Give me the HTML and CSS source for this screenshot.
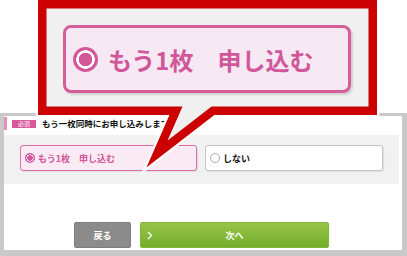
FILE: index.html
```html
<!DOCTYPE html>
<html>
<head>
    <meta charset="UTF-8">
    <title>もう一枚同時にお申し込み</title>
    <link rel="stylesheet" href="styles.css">
</head>
<body>
<div class="page">

    <div class="shot">
        <div class="q_head">
            <span class="badge">必須</span>
            <span class="q_title">もう一枚同時にお申し込みします</span>
        </div>
        <div class="panel">
            <label class="opt opt_on"><span class="radio"></span>もう1枚　申し込む</label>
            <label class="opt"><span class="radio"></span>しない</label>
        </div>
        <div class="actions">
            <button class="btn btn_back" type="button">戻る</button>
            <button class="btn btn_next" type="button">
                <svg class="chev" width="6" height="9" viewBox="0 0 6 9"><polyline points="1,1 4.5,4.5 1,8" fill="none" stroke="#fff" stroke-width="1.3"/></svg>
                次へ
            </button>
        </div>
    </div>

    <!-- zoomed callout -->
    <div class="callout">
        <svg class="callout_shape" width="407" height="180" viewBox="0 0 407 180">
            <path d="M42.25,4.25 H372.75 V110.75 H213 L157,154 L176,110.75 H42.25 Z"
                  fill="#f0f0f0" stroke="#fff" stroke-width="13" stroke-linejoin="miter" stroke-miterlimit="8"/>
            <path d="M42.25,4.25 H372.75 V110.75 H213 L157,154 L176,110.75 H42.25 Z"
                  fill="#f0f0f0" stroke="#cc0000" stroke-width="8.5" stroke-linejoin="miter" stroke-miterlimit="8"/>
        </svg>
        <div class="big_opt"><span class="big_radio"></span>もう1枚　申し込む</div>
    </div>

</div>
</body>
</html>
```

FILE: styles.css
```css
body {
    margin: 0;
    background: #fff;
    font-family: "Noto Sans CJK JP", sans-serif;
    color: #222;
}

.page {
    position: relative;
    width: 407px;
    height: 256px;
    overflow: hidden;
}

.shot {
    margin-top: 113px;
    height: 134px;
    border: solid #c9c9c9;
    border-width: 3px 5px 6px 4px;
    background: #fff;
}

.q_head {
    display: flex;
    align-items: center;
    height: 13px;
    margin-top: 1px;
    border-left: 3px solid #e58fbd;
}

.badge {
    width: 24px;
    height: 8px;
    margin-left: 5px;
    background: #d75a9b;
    color: #fff;
    font-size: 6px;
    line-height: 8px;
    text-align: center;
}

.q_title {
    margin-left: 6px;
    font-size: 8.5px;
    font-weight: bold;
    line-height: 13px;
    color: #111;
}

.panel {
    display: flex;
    gap: 8px;
    height: 49px;
    box-sizing: border-box;
    margin: 5px 3px 0 0;
    padding: 10px 0 0 16px;
    background: #f1f1f1;
}

.opt {
    display: flex;
    align-items: center;
    box-sizing: border-box;
    width: 178px;
    height: 26px;
    padding-left: 4px;
    border: 1px solid #c6c6c6;
    border-radius: 3px;
    background: #fff;
    box-shadow: 1px 1px 1px rgba(0, 0, 0, .08);
    font-size: 9px;
    font-weight: bold;
    color: #111;
}

.opt .radio {
    width: 10px;
    height: 10px;
    box-sizing: border-box;
    margin-right: 3px;
    border: 1px solid #aaa;
    border-radius: 50%;
    background: #fff;
}

.opt_on {
    width: 177px;
    border: 1.5px solid #dc6ea5;
    background: #f9eaf3;
    color: #d2569a;
}

.opt_on .radio {
    border: none;
    background: radial-gradient(circle, #d4579a 0 2.6px, #fff 3px 3.4px, #d4579a 3.8px);
}

.actions {
    display: flex;
    gap: 9px;
    margin-top: 38px;
    padding-left: 70px;
}

.btn {
    position: relative;
    height: 26px;
    box-sizing: border-box;
    border-radius: 2px;
    color: #fff;
    font: bold 9px/24px "Noto Sans CJK JP", sans-serif;
    text-align: center;
    cursor: pointer;
}

.btn_back {
    width: 57px;
    border: 1px solid #7d7d7d;
    background: #8b8b8b;
}

.btn_next {
    width: 189px;
    border: 1px solid #7fb539;
    background: linear-gradient(#95c447, #76ad2b);
}

.chev {
    position: absolute;
    left: 6px;
    top: 8px;
}

.callout {
    position: absolute;
    left: 0;
    top: 0;
    width: 407px;
    height: 180px;
}

.callout_shape {
    position: absolute;
    left: 0;
    top: 0;
}

.big_opt {
    position: relative;
    display: flex;
    align-items: center;
    box-sizing: border-box;
    width: 288px;
    height: 68px;
    margin: 25px 0 0 63px;
    padding-left: 7px;
    border: 3px solid #d55d98;
    border-radius: 8px;
    background: #f6e9f3;
    box-shadow: 2px 2px 2px rgba(0, 0, 0, .13);
    color: #d0589a;
    font-size: 24px;
    font-weight: bold;
}

.big_radio {
    width: 25px;
    height: 25px;
    margin-right: 10px;
    border-radius: 50%;
    background: radial-gradient(circle, #d4579a 0 6.5px, #fff 7px 9px, #d4579a 9.5px);
}
```
